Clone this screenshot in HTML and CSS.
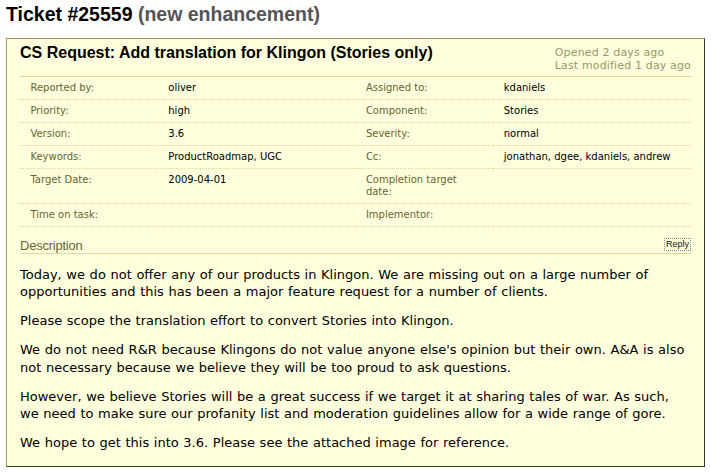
FILE: index.html
```html
<!DOCTYPE html>
<html>
<head>
<meta charset="utf-8">
<title>Ticket #25559</title>
<link rel="stylesheet" href="styles.css">
</head>
<body>
<div class="page">
  <h1 class="title">Ticket #25559 <span class="status">(new enhancement)</span></h1>
  <div class="ticket">
    <div class="head">
      <h2 class="summary">CS Request: Add translation for Klingon (Stories only)</h2>
      <div class="date">
        <p>Opened 2 days ago</p>
        <p>Last modified 1 day ago</p>
      </div>
    </div>
    <table class="props">
      <tr><th>Reported by:</th><td>oliver</td><th>Assigned to:</th><td>kdaniels</td></tr>
      <tr><th>Priority:</th><td>high</td><th>Component:</th><td>Stories</td></tr>
      <tr><th>Version:</th><td>3.6</td><th>Severity:</th><td>normal</td></tr>
      <tr><th>Keywords:</th><td>ProductRoadmap, UGC</td><th>Cc:</th><td>jonathan, dgee, kdaniels, andrew</td></tr>
      <tr><th>Target Date:</th><td>2009-04-01</td><th>Completion target date:</th><td></td></tr>
      <tr><th>Time on task:</th><td></td><th>Implementor:</th><td></td></tr>
    </table>
    <div class="desc">
      <div class="desc-head">
        <h3 class="desc-title">Description</h3>
        <span class="reply">Reply</span>
      </div>
      <p>Today, we do not offer any of our products in Klingon. We are missing out on a large number of<br>opportunities and this has been a major feature request for a number of clients.</p>
      <p>Please scope the translation effort to convert Stories into Klingon.</p>
      <p>We do not need R&amp;R because Klingons do not value anyone else's opinion but their own. A&amp;A is also<br>not necessary because we believe they will be too proud to ask questions.</p>
      <p>However, we believe Stories will be a great success if we target it at sharing tales of war. As such,<br>we need to make sure our profanity list and moderation guidelines allow for a wide range of gore.</p>
      <p>We hope to get this into 3.6. Please see the attached image for reference.</p>
    </div>
  </div>
</div>
</body>
</html>
```
FILE: styles.css
```css
html, body {
  margin: 0;
  padding: 0;
  background: #ffffff;
}

body {
  font-family: "DejaVu Sans", Verdana, sans-serif;
  font-size: 13px;
  color: #000000;
}

.page {
  padding: 0 6px;
}

.title {
  font-family: "Liberation Sans", Arial, sans-serif;
  font-size: 19.5px;
  font-weight: bold;
  line-height: 24px;
  margin: 0 0 12px;
  padding-top: 2px;
  color: #000000;
}

.status {
  color: #555555;
}

.ticket {
  background: #ffffdd;
  border: 1px solid;
  border-color: #999966 #35352a #35352a #999966;
  padding: 5px 13px 3px;
}

.head {
  display: flex;
  justify-content: space-between;
  align-items: flex-start;
  padding-bottom: 4px;
}

.summary {
  margin: 0;
  font-family: "Liberation Sans", Arial, sans-serif;
  font-size: 16px;
  line-height: 18px;
  font-weight: bold;
  color: #000000;
}

.date {
  color: #999966;
  font-size: 11px;
  line-height: 13px;
  letter-spacing: 0.15px;
  margin-top: 2px;
}

.date p {
  margin: 0;
}

.props {
  width: 100%;
  border-collapse: collapse;
  table-layout: fixed;
  border-top: 1px solid #dddd99;
}

.props tr {
  border-top: 1px dotted #dddd99;
  border-bottom: 1px dotted #dddd99;
}

.props th,
.props td {
  font-size: 10px;
  line-height: 12px;
  padding: 5px 10.4px;
  vertical-align: top;
  text-align: left;
}

.props th {
  color: #666633;
  font-weight: normal;
  width: 20%;
}

.props td {
  width: 30%;
  color: #000000;
}

.desc-head {
  display: flex;
  justify-content: space-between;
  align-items: flex-end;
  margin-top: 11px;
  height: 15px;
  border-bottom: 1px solid #dddd99;
}

.desc-title {
  margin: 0;
  font-family: "Liberation Sans", Arial, sans-serif;
  font-size: 13px;
  line-height: 15px;
  font-weight: normal;
  letter-spacing: -0.018em;
  color: #666633;
}

.reply {
  font-family: "Liberation Sans", Arial, sans-serif;
  font-size: 9px;
  line-height: 11px;
  padding: 0 1px;
  border: 1px dotted #888888;
  margin-bottom: 2px;
  color: #111122;
}

.desc p {
  margin: 11.5px 0;
  line-height: 17.5px;
  word-spacing: 0.5px;
}
```
